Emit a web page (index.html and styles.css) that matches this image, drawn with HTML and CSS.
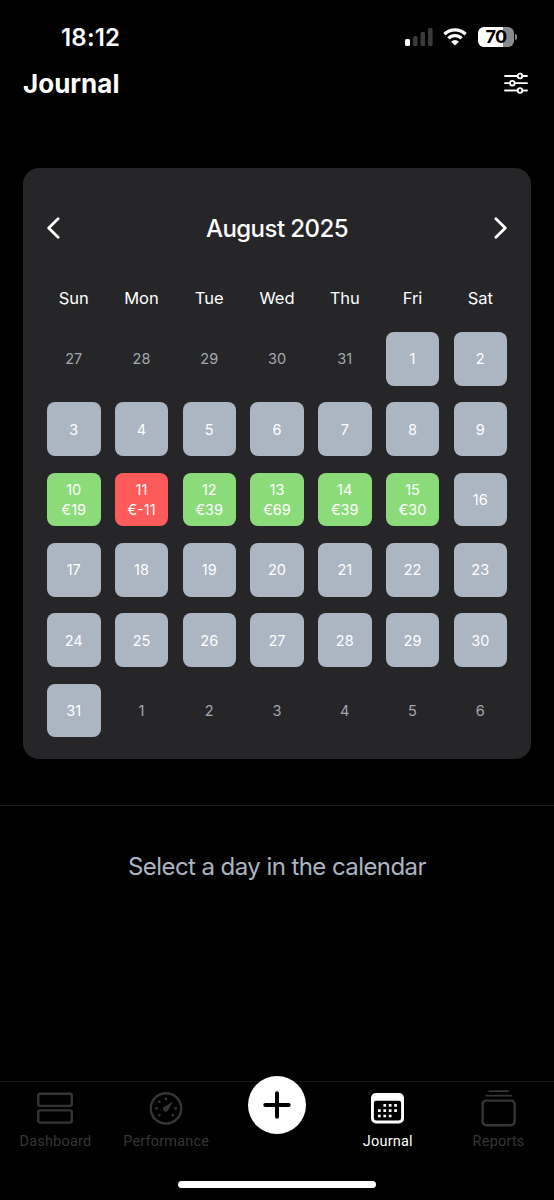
FILE: index.html
```html
<!DOCTYPE html>
<html lang="en">
<head>
  <meta charset="UTF-8" />
  <meta name="viewport" content="width=device-width, initial-scale=1.0"/>
  <title>Journal</title>
  <link rel="stylesheet" href="styles.css">
</head>
<body>
<div class="app">
  <div class="status-bar">
    <span class="time">18:12</span>
    <div class="status-icons">
      <svg class="signal" width="28" height="18" viewBox="0 0 28 18">
        <rect x="0" y="11" width="5" height="7" rx="1.5" fill="#fff"/>
        <rect x="8" y="8" width="4.6" height="10" rx="1.5" fill="#3a3a3a"/>
        <rect x="15.5" y="4" width="4.6" height="14" rx="1.5" fill="#3a3a3a"/>
        <rect x="23" y="0" width="4.6" height="18" rx="1.5" fill="#3a3a3a"/>
      </svg>
      <svg class="wifi" width="24" height="18" viewBox="0 0 24 18">
        <g fill="none" stroke="#fff" stroke-width="3.3">
          <path d="M1.4 6.2a15.2 15.2 0 0 1 21.2 0"/>
          <path d="M5.4 10.4a9.4 9.4 0 0 1 13.2 0"/>
        </g>
        <path d="M12 17.6l-3.9-3.9a5.6 5.6 0 0 1 7.8 0z" fill="#fff"/>
      </svg>
      <div class="battery"><span>70</span></div>
    </div>
  </div>

  <header class="header">
    <h1>Journal</h1>
    <button class="icon-button" aria-label="Filter">
      <svg width="24" height="22" viewBox="0 0 24 22" fill="none" stroke="#fff" stroke-width="1.8" stroke-linecap="round">
        <path d="M1 4h12.6M18.4 4H23M1 11.2h4.9M10.7 11.2H23M1 18.5h12.6M18.4 18.5H23"/>
        <circle cx="16" cy="4" r="2.3"/>
        <circle cx="8.3" cy="11.2" r="2.3"/>
        <circle cx="16" cy="18.5" r="2.3"/>
      </svg>
    </button>
  </header>

  <main>
    <section class="calendar">
      <div class="month">
        <button class="icon-button" aria-label="Previous month">
          <svg width="13" height="22" viewBox="0 0 13 22"><path d="M11.1 1.8L1.7 11l9.4 9.2"/></svg>
        </button>
        <h2>August 2025</h2>
        <button class="icon-button" aria-label="Next month">
          <svg width="13" height="22" viewBox="0 0 13 22"><path d="M1.9 1.8l9.4 9.2-9.4 9.2"/></svg>
        </button>
      </div>

      <div class="weekdays">
        <span>Sun</span><span>Mon</span><span>Tue</span><span>Wed</span><span>Thu</span><span>Fri</span><span>Sat</span>
      </div>

      <div class="days">
        <div class="day out">27</div>
        <div class="day out">28</div>
        <div class="day out">29</div>
        <div class="day out">30</div>
        <div class="day out">31</div>
        <div class="day">1</div>
        <div class="day">2</div>
        <div class="day">3</div>
        <div class="day">4</div>
        <div class="day">5</div>
        <div class="day">6</div>
        <div class="day">7</div>
        <div class="day">8</div>
        <div class="day">9</div>
        <div class="day win">10<span>€19</span></div>
        <div class="day loss">11<span>€-11</span></div>
        <div class="day win">12<span>€39</span></div>
        <div class="day win">13<span>€69</span></div>
        <div class="day win">14<span>€39</span></div>
        <div class="day win">15<span>€30</span></div>
        <div class="day">16</div>
        <div class="day">17</div>
        <div class="day">18</div>
        <div class="day">19</div>
        <div class="day">20</div>
        <div class="day">21</div>
        <div class="day">22</div>
        <div class="day">23</div>
        <div class="day">24</div>
        <div class="day">25</div>
        <div class="day">26</div>
        <div class="day">27</div>
        <div class="day">28</div>
        <div class="day">29</div>
        <div class="day">30</div>
        <div class="day">31</div>
        <div class="day out">1</div>
        <div class="day out">2</div>
        <div class="day out">3</div>
        <div class="day out">4</div>
        <div class="day out">5</div>
        <div class="day out">6</div>
      </div>
    </section>

    <p class="hint">Select a day in the calendar</p>
  </main>

  <nav class="tab-bar">
    <a class="tab">
      <svg width="36" height="36" viewBox="0 0 36 36" fill="none" stroke="currentColor" stroke-width="2.4">
        <rect x="1.2" y="2.7" width="33.6" height="12.2" rx="2"/>
        <rect x="1.2" y="19.4" width="33.6" height="12.2" rx="2"/>
      </svg>
      <span>Dashboard</span>
    </a>
    <a class="tab">
      <svg width="36" height="36" viewBox="0 0 36 36">
        <circle cx="18" cy="17.4" r="15.2" fill="none" stroke="currentColor" stroke-width="2.4"/>
        <path d="M25.2 10.2L20.1 19.2a2.700 2.700 0 1 1-4.100-3.300z" fill="currentColor"/>
        <g fill="currentColor">
          <circle cx="18" cy="8" r="1.4"/>
          <circle cx="11.3" cy="10.8" r="1.4"/>
          <circle cx="8.5" cy="17.4" r="1.4"/>
          <circle cx="11.3" cy="24.100" r="1.4"/>
          <circle cx="24.7" cy="24.100" r="1.4"/>
          <circle cx="27.5" cy="17.4" r="1.4"/>
        </g>
      </svg>
      <span>Performance</span>
    </a>
    <div class="tab">
      <button class="add" aria-label="Add">
        <svg width="28" height="28" viewBox="0 0 28 28" stroke="#000" stroke-width="4" stroke-linecap="round"><path d="M14 2.3v23.4M2.3 14h23.4"/></svg>
      </button>
    </div>
    <a class="tab active">
      <svg width="36" height="36" viewBox="0 0 36 36">
        <path fill="currentColor" fill-rule="evenodd" d="M6 2h23a5 5 0 0 1 5 5v20.400a5 5 0 0 1-5 5H6a5 5 0 0 1-5-5V7a5 5 0 0 1 5-5zM6.100 9.800a2.200 2.200 0 0 0-2.200 2.200v15a2.400 2.400 0 0 0 2.400 2.400h22.400a2.400 2.400 0 0 0 2.400-2.400V12a2.200 2.200 0 0 0-2.200-2.200z"/>
        <g fill="none" stroke="currentColor" stroke-width="2.700" stroke-dasharray="2.700 2.700">
          <path d="M13.400 14.300h13.600"/>
          <path d="M8 19.700h19"/>
          <path d="M8 25h13.600"/>
        </g>
      </svg>
      <span>Journal</span>
    </a>
    <a class="tab">
      <svg width="36" height="36" viewBox="0 0 36 36" fill="none" stroke="currentColor">
        <path d="M8.200 .2h18.800M5 4.700h25.200" stroke-width="1.800" stroke-linecap="round"/>
        <rect x="1.600" y="9.600" width="32" height="24.600" rx="3.600" stroke-width="2.400"/>
      </svg>
      <span>Reports</span>
    </a>
  </nav>
  <div class="home-indicator"></div>
</div>
</body>
</html>
```
FILE: styles.css
```css
* { box-sizing: border-box; }
body {
  margin: 0;
  font-family: Inter, 'Liberation Sans', sans-serif;
  background: #000;
  color: #fff;
}
h1, h2, p { margin: 0; }
svg { display: block; }
button {
  border: none;
  padding: 0;
  font: inherit;
  cursor: pointer;
}
.icon-button { background: none; }
.app {
  height: 1200px;
  display: flex;
  flex-direction: column;
  overflow: hidden;
}
.status-bar {
  height: 62px;
  padding: 12px 37px 0 61px;
  display: flex;
  justify-content: space-between;
  align-items: center;
}
.time {
  font-size: 24px;
  font-weight: 600;
  letter-spacing: 0.2px;
}
.status-icons {
  display: flex;
  align-items: center;
}
.wifi { margin: 0 11px 0 10px; }
.battery {
  position: relative;
  width: 36px;
  height: 20px;
  margin-right: 3px;
  border-radius: 6px;
  background: linear-gradient(to right, #fff 70%, #8b8b8b 70%);
  color: #000;
  font-size: 18px;
  font-weight: 700;
  letter-spacing: -0.7px;
  line-height: 20px;
  text-align: center;
}
.battery::after {
  content: '';
  position: absolute;
  right: -3px;
  top: 7px;
  width: 2px;
  height: 6px;
  border-radius: 0 2px 2px 0;
  background: #8b8b8b;
}
.header {
  height: 42px;
  padding: 0 26px 0 23px;
  display: flex;
  justify-content: space-between;
  align-items: center;
}
.header h1 {
  padding-top: 1px;
  font-size: 26px;
  font-weight: 700;
  line-height: 41px;
}
main { flex: 1; }
.calendar {
  height: 591px;
  margin: 64px 23px 46px;
  padding: 49px 24px 0;
  border-radius: 16px;
  background: #262628;
}
.month {
  height: 22px;
  display: flex;
  justify-content: space-between;
  align-items: center;
}
.month path {
  fill: none;
  stroke: #fff;
  stroke-width: 2.8;
  stroke-linecap: round;
  stroke-linejoin: round;
}
.month h2 {
  font-size: 24px;
  font-weight: 500;
  letter-spacing: -0.55px;
}
.weekdays, .days {
  display: grid;
  grid-template-columns: repeat(7, 53.5px);
  justify-content: space-between;
}
.weekdays {
  margin-top: 48px;
  font-size: 16.5px;
  line-height: 22px;
  text-align: center;
}
.days {
  margin-top: 23px;
  grid-auto-rows: 53.5px;
  row-gap: 16.85px;
}
.day {
  padding-top: 1px;
  display: flex;
  flex-direction: column;
  justify-content: center;
  align-items: center;
  border-radius: 8px;
  background: #acb5c2;
  font-size: 14.5px;
  line-height: 20px;
}
.day.out {
  background: none;
  color: #a3a8b1;
}
.day.win { background: #8cdb7a; }
.day.loss { background: #ff5a5a; }
.hint {
  padding-top: 45px;
  border-top: 1px solid #1c1c1d;
  color: #acb5c2;
  font-size: 24px;
  letter-spacing: -0.57px;
  line-height: 32px;
  text-align: center;
}
.tab-bar {
  height: 87px;
  display: flex;
  border-top: 1px solid #151515;
}
.tab {
  flex: 1;
  padding-top: 9px;
  display: flex;
  flex-direction: column;
  align-items: center;
  color: #353535;
  font-family: Roboto, sans-serif;
  font-size: 14.5px;
  letter-spacing: 0.2px;
}
.tab svg { overflow: visible; }
.tab span {
  margin-top: 6px;
  line-height: 17px;
}
.tab.active { color: #fff; }
.add {
  width: 58px;
  height: 58px;
  flex: none;
  margin-top: -15px;
  display: flex;
  justify-content: center;
  align-items: center;
  border-radius: 50%;
  background: #fff;
}
.home-indicator {
  width: 198px;
  height: 7px;
  margin: 13px auto 12px;
  border-radius: 4px;
  background: #fff;
}
```
